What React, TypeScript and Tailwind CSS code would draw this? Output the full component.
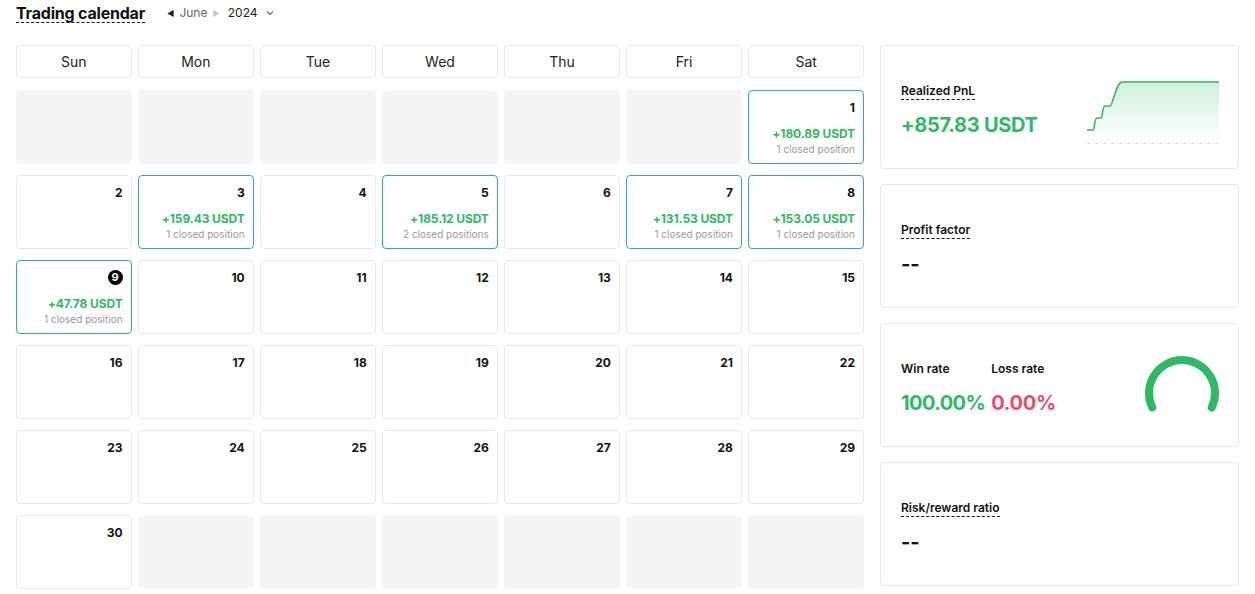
import React from "react";

type Day = {
   day: number | null;
   pnl?: string;
   positions?: string;
   today?: boolean;
};

const weekDays = ["Sun", "Mon", "Tue", "Wed", "Thu", "Fri", "Sat"];

const pnlByDay: Record<number, { pnl: string; positions: string }> = {
   1: { pnl: "+180.89 USDT", positions: "1 closed position" },
   3: { pnl: "+159.43 USDT", positions: "1 closed position" },
   5: { pnl: "+185.12 USDT", positions: "2 closed positions" },
   7: { pnl: "+131.53 USDT", positions: "1 closed position" },
   8: { pnl: "+153.05 USDT", positions: "1 closed position" },
   9: { pnl: "+47.78 USDT", positions: "1 closed position" },
};

function buildDays(): Day[] {
   const days: Day[] = [];
   for (let i = 0; i < 6; i++) days.push({ day: null });
   for (let d = 1; d <= 30; d++) {
      const info = pnlByDay[d];
      days.push({ day: d, pnl: info?.pnl, positions: info?.positions, today: d === 9 });
   }
   while (days.length < 42) days.push({ day: null });
   return days;
}

const DayCell = ({ item }: { item: Day }) => {
   if (item.day === null) {
      return <div className="h-[74px] rounded-[4px] bg-[#f5f5f5]" />;
   }
   const hasPnl = !!item.pnl;
   return (
      <div
         className={`h-[74px] rounded-[4px] border bg-white flex flex-col items-end pl-[7px] pr-[8px] pt-[8px] pb-[7px] ${
            hasPnl ? "border-[#2fb865]" : "border-[#e8e8e8]"
         }`}
      >
         {item.today ? (
            <div className="w-[15px] h-[15px] rounded-full bg-black text-white text-[11px] font-bold flex items-center justify-center leading-none mt-[1px]">
               {item.day}
            </div>
         ) : (
            <div className="text-[12px] font-bold text-[#111] leading-[17px]">{item.day}</div>
         )}
         {hasPnl && (
            <div className="mt-auto flex flex-col items-end">
               <div className="text-[12px] font-bold text-[#2fb865] leading-[16px] tracking-[-0.1px]">{item.pnl}</div>
               <div className="text-[10px] text-[#999] leading-[14px]">{item.positions}</div>
            </div>
         )}
      </div>
   );
};

const Label = ({ children }: { children: React.ReactNode }) => (
   <span className="text-[12px] font-semibold text-[#111] leading-[15px] border-b border-dashed border-[#111] pb-[1px]">
      {children}
   </span>
);

const PnlChart = () => (
   <svg width="132" height="66" viewBox="0 0 132 66" className="mt-[4px]">
      <defs>
         <linearGradient id="pnlFill" x1="0" y1="0" x2="0" y2="1">
            <stop offset="0%" stopColor="#2fb865" stopOpacity="0.22" />
            <stop offset="100%" stopColor="#2fb865" stopOpacity="0" />
         </linearGradient>
      </defs>
      <path
         d="M0 51 L6 51 C8 51 7 39 10 39 L14 39 C16 39 15 27 18 27 L23 27 C26 27 29 3 35 3 L132 3 L132 64 L0 64 Z"
         fill="url(#pnlFill)"
      />
      <path
         d="M0 51 L6 51 C8 51 7 39 10 39 L14 39 C16 39 15 27 18 27 L23 27 C26 27 29 3 35 3 L132 3"
         fill="none"
         stroke="#2fb865"
         strokeWidth="1.6"
      />
      <line x1="0" y1="64.5" x2="132" y2="64.5" stroke="#e3e3e3" strokeWidth="1" strokeDasharray="4 4" />
   </svg>
);

const Gauge = () => (
   <svg width="80" height="58" viewBox="0 0 80 58" className="-mt-[6px]">
      <path
         d="M10.3 51.5 A33 33 0 1 1 69.7 51.5"
         fill="none"
         stroke="#2fb865"
         strokeWidth="8"
         strokeLinecap="round"
      />
   </svg>
);

const App = () => {
   const days = buildDays();
   return (
      <div
         className="w-full min-h-screen bg-white text-[#111]"
         style={{ fontFamily: "Inter, 'Noto Sans', sans-serif" }}
      >
         <div className="h-[45px] px-4 flex items-start pt-[4px]">
            <div className="flex items-center gap-[22px]">
               <span className="text-[16px] font-bold leading-[18px] tracking-[-0.2px] border-b border-dashed border-[#111]">
                  Trading calendar
               </span>
               <div className="flex items-center text-[12px] gap-[5px] -mt-[1px]">
                  <span className="text-[8px] text-[#222]">◀</span>
                  <span className="text-[#666]">June</span>
                  <span className="text-[8px] text-[#c8c8c8]">▶</span>
                  <span className="text-[#222] ml-[3px]">2024</span>
                  <svg width="10" height="10" viewBox="0 0 10 10" className="ml-[2px]">
                     <path d="M2 3.5 L5 6.5 L8 3.5" fill="none" stroke="#666" strokeWidth="1.1" />
                  </svg>
               </div>
            </div>
         </div>
         <div className="flex px-4 gap-4">
            <div className="flex-1">
               <div className="grid grid-cols-7 gap-x-[6.5px]">
                  {weekDays.map((d) => (
                     <div
                        key={d}
                        className="h-[33px] rounded-[4px] border border-[#e8e8e8] flex items-center justify-center text-[14px] text-[#222]"
                     >
                        {d}
                     </div>
                  ))}
               </div>
               <div className="grid grid-cols-7 gap-x-[6.5px] gap-y-[11px] mt-3">
                  {days.map((item, i) => (
                     <DayCell key={i} item={item} />
                  ))}
               </div>
            </div>
            <div className="w-[359px] flex flex-col gap-[15px]">
               <div className="h-[124px] rounded-[4px] border border-[#e8e8e8] flex items-center justify-between pl-[20px] pr-[19px] pt-[6px]">
                  <div className="flex flex-col items-start gap-[13px]">
                     <Label>Realized PnL</Label>
                     <span className="text-[20px] font-bold text-[#2fb865] leading-[24px] tracking-[-0.3px]">+857.83 USDT</span>
                  </div>
                  <PnlChart />
               </div>
               <div className="h-[124px] rounded-[4px] border border-[#e8e8e8] flex items-center pl-[20px] pt-[6px]">
                  <div className="flex flex-col items-start gap-[13px]">
                     <Label>Profit factor</Label>
                     <span className="text-[20px] font-bold leading-[24px]">--</span>
                  </div>
               </div>
               <div className="h-[124px] rounded-[4px] border border-[#e8e8e8] flex items-center justify-between pl-[20px] pr-[16px] pt-[6px]">
                  <div className="flex gap-[6px]">
                     <div className="flex flex-col items-start gap-[14px]">
                        <span className="text-[12px] font-semibold leading-[16px]">Win rate</span>
                        <span className="text-[20px] font-bold text-[#2fb865] leading-[24px] tracking-[-0.6px]">100.00%</span>
                     </div>
                     <div className="flex flex-col items-start gap-[14px]">
                        <span className="text-[12px] font-semibold leading-[16px]">Loss rate</span>
                        <span className="text-[20px] font-bold text-[#ee4b6d] leading-[24px] tracking-[-0.3px]">0.00%</span>
                     </div>
                  </div>
                  <Gauge />
               </div>
               <div className="h-[124px] rounded-[4px] border border-[#e8e8e8] flex items-center pl-[20px] pt-[6px]">
                  <div className="flex flex-col items-start gap-[13px]">
                     <Label>Risk/reward ratio</Label>
                     <span className="text-[20px] font-bold leading-[24px]">--</span>
                  </div>
               </div>
            </div>
         </div>
      </div>
   );
};

export default App;
